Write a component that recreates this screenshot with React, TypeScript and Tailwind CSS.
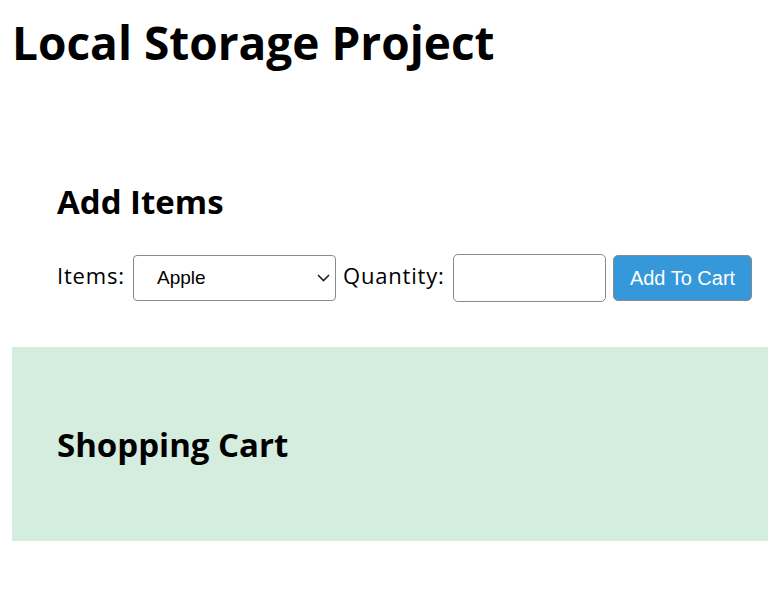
const ui = "font-['Open_Sans','Noto_Sans',sans-serif]";
const control = "font-['Liberation_Sans',Arial,sans-serif]";

export default function App() {
  return (
    <div className={`min-h-[613px] bg-white text-black ${ui}`}>
      <div className="pl-3 pt-3">
        <h1 className="text-[46px] font-bold leading-[60px]">Local Storage Project</h1>
      </div>

      <section className="pl-[57px] pt-[108px]">
        <h2 className="text-[33px] font-bold leading-[44px]">Add Items</h2>
        <form className="mt-[30px] flex h-[48px] items-center text-[22px] tracking-[0.8px]" onSubmit={(e) => e.preventDefault()}>
          <label htmlFor="item" className="mb-[6px] w-[76px] whitespace-nowrap leading-[30px]">
            Items:
          </label>
          <div className="relative">
            <select
              id="item"
              defaultValue="Apple"
              className={`h-[46px] w-[203px] appearance-none rounded-[4px] border border-[#8a8a8a] bg-white pl-[23px] text-[19px] tracking-normal text-black ${control}`}
            >
              <option>Apple</option>
              <option>Banana</option>
              <option>Orange</option>
            </select>
            <svg
              className="pointer-events-none absolute right-[6px] top-[19px]"
              width="13"
              height="8"
              viewBox="0 0 13 8"
              fill="none"
              stroke="#222"
              strokeWidth="1.6"
            >
              <polyline points="1,1 6.5,6.5 12,1" />
            </svg>
          </div>
          <label htmlFor="qty" className="mb-[6px] ml-[7px] w-[110px] whitespace-nowrap leading-[30px]">
            Quantity:
          </label>
          <input
            id="qty"
            type="number"
            className="h-[48px] w-[153px] rounded-[5px] border border-[#8a8a8a] bg-white"
          />
          <button
            type="submit"
            className={`ml-[7px] h-[46px] w-[139px] rounded-[5px] border border-[#8a8a8a] bg-[#3498db] text-[20px] tracking-normal text-white ${control}`}
          >
            Add To Cart
          </button>
        </form>
      </section>

      <section className="ml-3 mt-[45px] h-[194px] bg-[#d4eddf] pl-[45px] pt-[76px]">
        <h2 className="text-[33px] font-bold leading-[44px]">Shopping Cart</h2>
      </section>
    </div>
  );
}
